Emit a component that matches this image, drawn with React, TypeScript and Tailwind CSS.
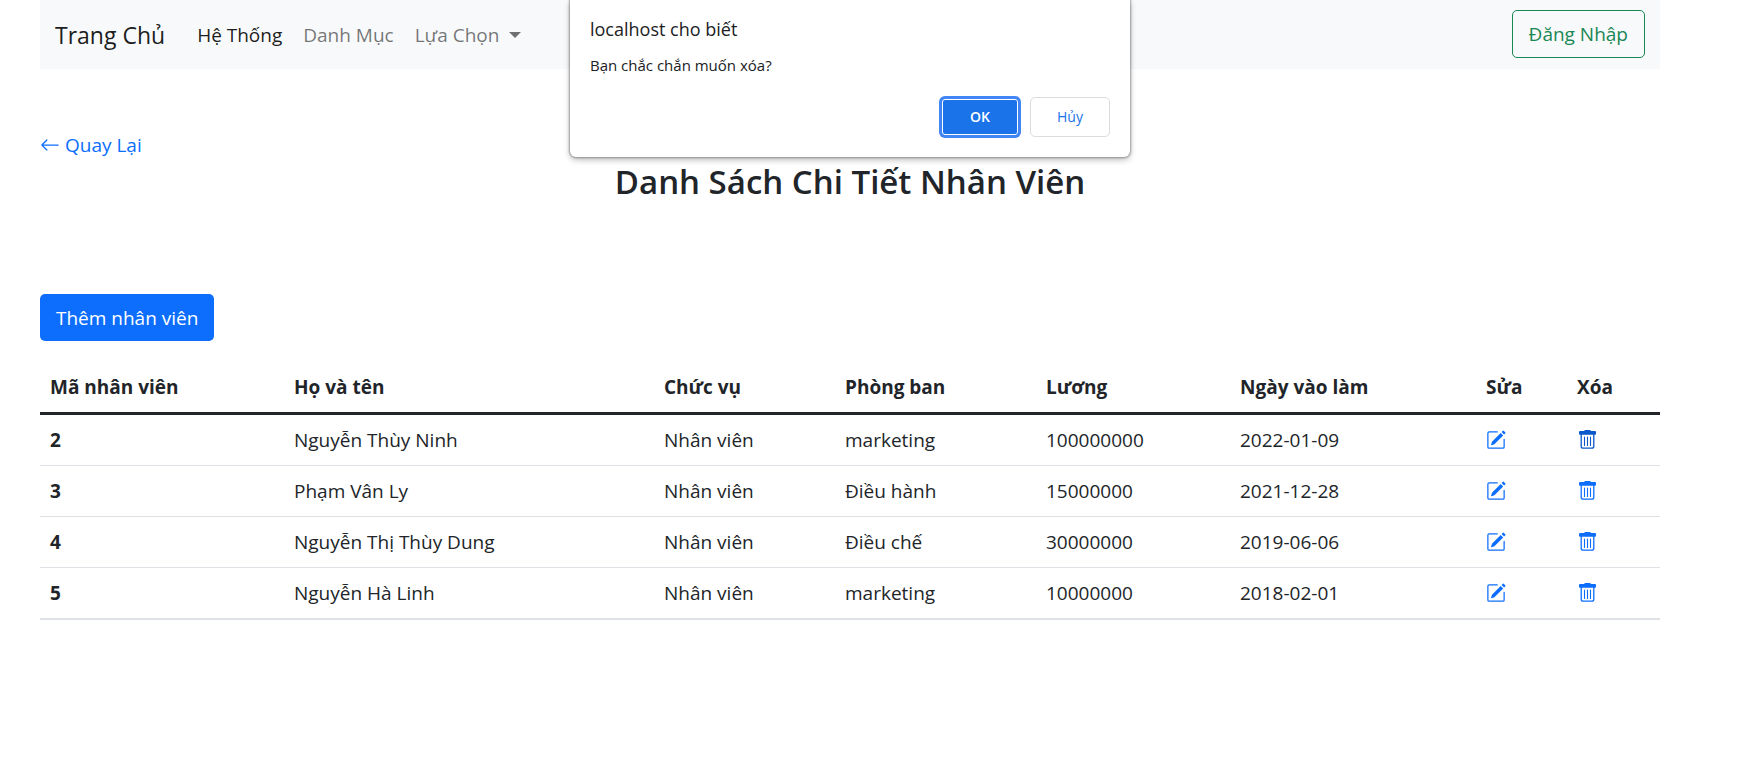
import { BsArrowLeft, BsPencilSquare } from "react-icons/bs";

const employees = [
  { id: 2, name: "Nguyễn Thùy Ninh", role: "Nhân viên", dept: "marketing", salary: "100000000", date: "2022-01-09" },
  { id: 3, name: "Phạm Vân Ly", role: "Nhân viên", dept: "Điều hành", salary: "15000000", date: "2021-12-28" },
  { id: 4, name: "Nguyễn Thị Thùy Dung", role: "Nhân viên", dept: "Điều chế", salary: "30000000", date: "2019-06-06" },
  { id: 5, name: "Nguyễn Hà Linh", role: "Nhân viên", dept: "marketing", salary: "10000000", date: "2018-02-01" },
];

const columns = [
  { label: "Mã nhân viên", width: "w-[244px]" },
  { label: "Họ và tên", width: "w-[370px]" },
  { label: "Chức vụ", width: "w-[181px]" },
  { label: "Phòng ban", width: "w-[201px]" },
  { label: "Lương", width: "w-[194px]" },
  { label: "Ngày vào làm", width: "w-[246px]" },
  { label: "Sửa", width: "w-[91px]" },
  { label: "Xóa", width: "w-[93px]" },
];

function TrashIcon() {
  return (
    <svg viewBox="0 0 20 20" className="size-5" fill="none" stroke="currentColor" aria-hidden="true">
      <path
        d="M8 0h5l1 1h4a1 1 0 0 1 1 1v1.8a1 1 0 0 1-1 1H3a1 1 0 0 1-1-1V2a1 1 0 0 1 1-1h4z"
        fill="currentColor"
        stroke="none"
      />
      <path d="M4.2 4v12.2a2 2 0 0 0 2 2h8.6a2 2 0 0 0 2-2V4" strokeWidth="1.3" />
      <path d="M7.5 7v8.5M10.5 7v8.5M13.5 7v8.5" strokeWidth="1.1" strokeLinecap="round" />
    </svg>
  );
}

function Navbar() {
  return (
    <nav className="flex h-[69px] items-center bg-[#f8f9fa] px-[15px]">
      <a href="#" className="mr-8 text-[23px] text-black/90">Trang Chủ</a>
      <div className="flex items-center gap-[21px]">
        <a href="#" className="text-black/90">Hệ Thống</a>
        <a href="#" className="text-black/55">Danh Mục</a>
        <button type="button" className="flex items-center gap-[10px] text-black/55">
          Lựa Chọn
          <span className="border-x-6 border-t-6 border-x-transparent" />
        </button>
      </div>
      <button type="button" className="mb-px ml-auto h-12 rounded-[5px] border border-[#198754] px-4 text-[#198754]">
        Đăng Nhập
      </button>
    </nav>
  );
}

function ConfirmDialog() {
  return (
    <div
      role="dialog"
      aria-labelledby="confirm-title"
      className="absolute top-0 left-1/2 h-[157px] w-[560px] -translate-x-[304px] rounded-b-md bg-white px-5 pt-[17px] text-[#202124] shadow-[0_0_2px_1px_rgba(0,0,0,0.3),0_3px_6px_rgba(0,0,0,0.25)]"
    >
      <h2 id="confirm-title" className="text-[18px] leading-6">localhost cho biết</h2>
      <p className="mt-3 text-[15px] leading-6">Bạn chắc chắn muốn xóa?</p>
      <div className="mt-5 flex justify-end gap-[10px] text-[14px]">
        <button
          type="button"
          className="h-10 w-20 rounded-[5px] border-2 border-[#4285f4] bg-[#1a73e8] font-semibold text-white shadow-[inset_0_0_0_1px_#ffffff,0_0_0_1px_#4285f4]"
        >
          OK
        </button>
        <button type="button" className="h-10 w-20 rounded-[5px] border border-[#dadce0] font-medium text-[#1a73e8]">
          Hủy
        </button>
      </div>
    </div>
  );
}

export default function App() {
  return (
    <div className="relative min-h-screen bg-white pr-[88px] pl-10 font-['Open_Sans','Noto_Sans',sans-serif] text-[19px] leading-[30px] text-[#212529]">
      <Navbar />
      <main>
        <a href="#" className="mt-[61px] flex w-fit items-center gap-[5px] text-[#0d6efd]">
          <BsArrowLeft className="size-5" />
          Quay Lại
        </a>
        <h1 className="text-center text-[33px] leading-[44px] font-semibold">Danh Sách Chi Tiết Nhân Viên</h1>
        <button type="button" className="mt-[90px] h-[47px] rounded-[5px] bg-[#0d6efd] px-4 text-white">
          Thêm nhân viên
        </button>
        <table className="mt-[21px] w-full table-fixed border-collapse text-left">
          <thead>
            <tr className="border-b-3 border-[#212529]">
              {columns.map((c) => (
                <th key={c.label} scope="col" className={`${c.width} p-[10px] font-bold`}>{c.label}</th>
              ))}
            </tr>
          </thead>
          <tbody>
            {employees.map((e, i) => (
              <tr key={e.id} className="border-b border-[#dee2e6] last:border-b-2">
                <th scope="row" className="p-[10px] font-bold">{e.id}</th>
                <td className="p-[10px]">{e.name}</td>
                <td className="p-[10px]">{e.role}</td>
                <td className="p-[10px]">{e.dept}</td>
                <td className="p-[10px]">{e.salary}</td>
                <td className="p-[10px]">{e.date}</td>
                <td className="px-[10px]">
                  <a href="#" aria-label="Sửa" className="block w-fit text-[#0d6efd]">
                    <BsPencilSquare className="size-5" />
                  </a>
                </td>
                <td className="px-[10px]">
                  <a href="#" aria-label="Xóa" className={i === 0 ? "block w-fit text-[#0a58ca]" : "block w-fit text-[#0d6efd]"}>
                    <TrashIcon />
                  </a>
                </td>
              </tr>
            ))}
          </tbody>
        </table>
      </main>
      <ConfirmDialog />
    </div>
  );
}
